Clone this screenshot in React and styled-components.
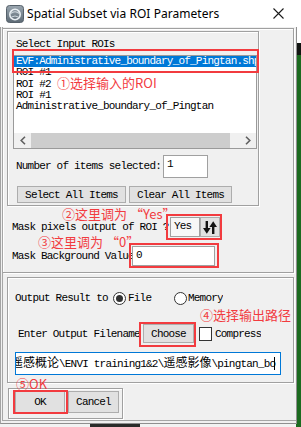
import React from 'react';
import styled, { createGlobalStyle } from 'styled-components';

const MONO = '"Liberation Mono", "Noto Sans CJK SC", monospace';
const CJK = '"Noto Sans CJK SC", "Noto Sans", sans-serif';
const RED = '#f23b3f';

const Global = createGlobalStyle`
  html, body { margin: 0; padding: 0; background: #fff; }
  body { width: 301px; height: 427px; overflow: hidden; }
  * { box-sizing: border-box; }
`;

const Desktop = styled.div`
  position: relative;
  width: 301px;
  height: 427px;
  display: grid;
  grid-template-columns: 297px 4px;
  grid-template-rows: 424px 3px;
  background: #fff;
`;

const RightStrip = styled.div`
  display: flex;
  flex-direction: column;
`;

const VSeg = styled.div`
  background: ${p => p.$c};
  height: ${p => (p.$h ? `${p.$h}px` : 'auto')};
  flex: ${p => (p.$h ? 'none' : 1)};
`;

const BottomStrip = styled.div`
  grid-column: 1 / 3;
  display: flex;
`;

const HSeg = styled.div`
  background: ${p => p.$c};
  width: ${p => (p.$w ? `${p.$w}px` : 'auto')};
  flex: ${p => (p.$w ? 'none' : 1)};
`;

const Window = styled.div`
  display: flex;
  flex-direction: column;
  border-left: 1px solid #a3a3a3;
  border-right: 1px solid #8f8f8f;
  border-bottom: 1px solid #8f8f8f;
  background: #f0f0f0;
  height: 424px;
`;

const TitleBar = styled.div`
  height: 27px;
  flex: none;
  background: #fff;
  display: flex;
  align-items: center;
  padding-left: 6px;
  margin-left: -1px;
  margin-right: -5px;
`;

const TitleText = styled.div`
  font-family: "Noto Sans", "Liberation Sans", sans-serif;
  font-size: 12px;
  color: #000;
  margin-left: 3px;
  flex: 1;
  letter-spacing: 0.05px;
`;

const CloseBox = styled.div`
  width: 30px;
  margin-right: 8px;
  display: flex;
  justify-content: center;
  align-items: center;
`;

const Client = styled.div`
  flex: 1;
  display: flex;
  flex-direction: column;
  align-items: flex-start;
  margin-left: 1px;
  border-left: 1px solid #a6a6a6;
  border-bottom: 1px solid #a6a6a6;
  padding-top: 1px;
  margin-bottom: 2px;
  width: 294px;
`;

const Etched = styled.div`
  border: 1px solid #a0a0a0;
  box-shadow: inset 1px 1px 0 #fff, 1px 1px 0 #fff;
`;

const PanelA = styled(Etched)`
  border-left: none;
  width: 291px;
  height: 245px;
  display: flex;
  flex-direction: column;
  align-items: flex-start;
`;

const InnerFrame = styled(Etched)`
  margin: 2px 0 0 4px;
  width: 252px;
  height: 175px;
  display: flex;
  flex-direction: column;
  align-items: flex-start;
`;

const Text = styled.div`
  font-family: ${MONO};
  font-size: 11px;
  letter-spacing: -0.8px;
  color: #000;
  white-space: nowrap;
  line-height: ${p => p.$lh || 12}px;
`;

const FrameLabel = styled(Text)`
  margin: 6px 0 0 8px;
  height: 12px;
`;

const ListBox = styled.div`
  margin: 5px 0 0 5px;
  width: 244px;
  height: 94px;
  border: 1px solid #9a9a9a;
  background: #fff;
  display: flex;
  flex-direction: column;
`;

const Rows = styled.div`
  flex: 1;
  overflow: hidden;
`;

const Row = styled(Text)`
  line-height: 11.3px;
  height: 11.3px;
  padding-left: 2px;
  background: ${p => (p.$sel ? '#0078d7' : 'transparent')};
  color: ${p => (p.$sel ? '#fff' : '#000')};
  overflow: hidden;
`;

const HScroll = styled.div`
  height: 15px;
  flex: none;
  background: #f0f0f0;
  display: flex;
  align-items: stretch;
`;

const ArrowBtn = styled.div`
  width: 17px;
  display: flex;
  align-items: center;
  justify-content: center;
`;

const Thumb = styled.div`
  width: 199px;
  background: #cdcdcd;
`;

const Track = styled.div`
  flex: 1;
`;

const FieldRow = styled.div`
  display: flex;
  align-items: ${p => p.$align || 'center'};
  margin: ${p => p.$m};
  height: ${p => p.$h}px;
`;

const TextField = styled.div`
  width: ${p => p.$w}px;
  height: ${p => p.$h}px;
  background: #fff;
  border: 1px solid ${p => (p.$focus ? '#0078d7' : '#a0a0a0')};
  padding: ${p => p.$pad || '2px 0 0 3px'};
  overflow: hidden;
  flex: none;
  font-family: ${MONO};
  font-size: 11px;
  letter-spacing: -0.8px;
  line-height: 12px;
  white-space: nowrap;
  color: #000;
`;

const Button = styled.div`
  width: ${p => p.$w}px;
  height: ${p => p.$h}px;
  background: #e1e1e1;
  border: 1px solid #adadad;
  display: flex;
  align-items: center;
  justify-content: center;
  flex: none;
  font-family: ${MONO};
  font-size: 11px;
  letter-spacing: -0.8px;
  color: #000;
  white-space: nowrap;
`;

const Label = styled(Text)`
  width: ${p => (p.$w ? `${p.$w}px` : 'auto')};
  overflow: hidden;
  flex: none;
`;

const PanelB = styled(Etched)`
  margin: 4px 0 0 4px;
  width: 287px;
  height: 106px;
  display: flex;
  flex-direction: column;
  align-items: flex-start;
`;

const Radio = styled.div`
  width: 13px;
  height: 13px;
  border-radius: 50%;
  border: 1px solid #333;
  background: #fff;
  display: flex;
  align-items: center;
  justify-content: center;
  flex: none;
  &::after {
    content: '';
    display: ${p => (p.$on ? 'block' : 'none')};
    width: 7px;
    height: 7px;
    border-radius: 50%;
    background: #333;
  }
`;

const Check = styled.div`
  width: 13px;
  height: 14px;
  border: 1px solid #333;
  background: #fff;
  flex: none;
`;

const Cjk = styled.span`
  font-family: ${CJK};
  font-size: 12px;
  letter-spacing: 0;
`;

const Caret = styled.span`
  display: inline-block;
  width: 1px;
  height: 13px;
  background: #000;
  vertical-align: -3px;
  margin-left: -1px;
`;

const PanelC = styled(Etched)`
  margin: 5px 0 0 5px;
  width: 115px;
  height: 31px;
  display: flex;
  align-items: flex-start;
  padding: 2px 0 0 6px;
  gap: 3px;
`;

const Note = styled.div`
  position: absolute;
  left: ${p => p.$x}px;
  top: ${p => p.$y}px;
  font-family: ${CJK};
  font-size: 13px;
  line-height: 15px;
  color: ${RED};
  white-space: nowrap;
`;

const Callout = styled.div`
  position: absolute;
  left: ${p => p.$x}px;
  top: ${p => p.$y}px;
  width: ${p => p.$w}px;
  height: ${p => p.$h}px;
  border: 2px solid ${RED};
`;

const AppIcon = () => (
  <svg width="18" height="18" viewBox="0 0 18 18">
    <defs>
      <linearGradient id="ig" x1="0" y1="0" x2="0" y2="1">
        <stop offset="0" stopColor="#9aa6b0" />
        <stop offset="1" stopColor="#5d6a75" />
      </linearGradient>
    </defs>
    <rect x="0.5" y="0.5" width="17" height="17" rx="3" fill="url(#ig)" stroke="#56616b" />
    <circle cx="9" cy="9.5" r="5.2" fill="none" stroke="#e8eef2" strokeWidth="1.6" />
    <path d="M4.5 8.5 Q9 5 13.5 8.5" fill="none" stroke="#cfd8de" strokeWidth="1.2" />
    <path d="M5.5 12 Q9 10 12.5 12" fill="none" stroke="#cfd8de" strokeWidth="1" />
  </svg>
);

const CloseIcon = () => (
  <svg width="11" height="11" viewBox="0 0 11 11">
    <path d="M0.5 0.5 L10.5 10.5 M10.5 0.5 L0.5 10.5" stroke="#1a1a1a" strokeWidth="1.1" />
  </svg>
);

const Chevron = ({ dir }) => (
  <svg width="6" height="9" viewBox="0 0 6 9">
    <path
      d={dir === 'left' ? 'M5 0.8 L1.2 4.5 L5 8.2' : 'M1 0.8 L4.8 4.5 L1 8.2'}
      fill="none"
      stroke="#606060"
      strokeWidth="1.6"
    />
  </svg>
);

const SwapIcon = () => (
  <svg width="14" height="13" viewBox="0 0 14 13">
    <rect x="2.6" y="0" width="2.4" height="8" fill="#111" />
    <polygon points="0,7 7.6,7 3.8,12.8" fill="#111" />
    <rect x="9" y="5" width="2.4" height="8" fill="#111" />
    <polygon points="6.4,6 14,6 10.2,0.2" fill="#111" />
  </svg>
);

export default function App() {
  return (
    <>
      <Global />
      <Desktop>
        <Window>
          <TitleBar>
            <AppIcon />
            <TitleText>Spatial Subset via ROI Parameters</TitleText>
            <CloseBox>
              <CloseIcon />
            </CloseBox>
          </TitleBar>
          <Client>
            <PanelA>
              <InnerFrame>
                <FrameLabel>Select Input ROIs</FrameLabel>
                <ListBox>
                  <Rows>
                    <Row $sel>EVF:Administrative_boundary_of_Pingtan.shp</Row>
                    <Row>ROI #1</Row>
                    <Row>ROI #2</Row>
                    <Row>ROI #1</Row>
                    <Row>Administrative_boundary_of_Pingtan</Row>
                  </Rows>
                  <HScroll>
                    <ArrowBtn><Chevron dir="left" /></ArrowBtn>
                    <Thumb />
                    <Track />
                    <ArrowBtn><Chevron dir="right" /></ArrowBtn>
                  </HScroll>
                </ListBox>
                <FieldRow $m="5px 0 0 8px" $h={24}>
                  <Label $w={147}>Number of items selected:</Label>
                  <TextField $w={45} $h={23}>1</TextField>
                </FieldRow>
                <FieldRow $m="8px 0 0 9px" $h={17} style={{ gap: '3px' }}>
                  <Button $w={109} $h={17}>Select All Items</Button>
                  <Button $w={103} $h={17}>Clear All Items</Button>
                </FieldRow>
              </InnerFrame>
              <FieldRow $m="11px 0 0 9px" $h={20}>
                <Label $w={158}>Mask pixels output of ROI ?</Label>
                <TextField $w={30} $h={20} style={{ background: '#f7f7f7' }}>Yes</TextField>
                <Button $w={20} $h={20}><SwapIcon /></Button>
              </FieldRow>
              <FieldRow $m="9px 0 0 9px" $h={20}>
                <Label $w={120}>Mask Background Value:</Label>
                <TextField $w={83} $h={20}>0</TextField>
              </FieldRow>
            </PanelA>

            <PanelB>
              <FieldRow $m="12px 0 0 7px" $h={16}>
                <Label $w={98}>Output Result to</Label>
                <Radio $on />
                <Label $w={46} style={{ marginLeft: '2px' }}>File</Label>
                <Radio />
                <Label style={{ marginLeft: '1px' }}>Memory</Label>
              </FieldRow>
              <FieldRow $m="18px 0 0 10px" $h={19}>
                <Label $w={125}>Enter Output Filename</Label>
                <Button $w={51} $h={19}>Choose</Button>
                <Check style={{ marginLeft: '5px' }} />
                <Label style={{ marginLeft: '3px' }}>Compress</Label>
              </FieldRow>
              <FieldRow $m="9px 0 0 7px" $h={23}>
                <TextField $w={266} $h={23} $focus $pad="3px 0 0 0">
                  <span style={{ display: 'inline-block', marginLeft: '-5px' }}>
                    <Cjk>遥感概论</Cjk>\ENVI training1&amp;2\<Cjk>遥感影像</Cjk>\pingtan_bo<Caret />
                  </span>
                </TextField>
              </FieldRow>
            </PanelB>

            <PanelC>
              <Button $w={50} $h={22}>OK</Button>
              <Button $w={51} $h={22}>Cancel</Button>
            </PanelC>
          </Client>
        </Window>

        <RightStrip>
          <VSeg $c="#ffffff" $h={43} />
          <VSeg $c="#121512" $h={12} />
          <VSeg $c="#1b6a1f" />
        </RightStrip>

        <BottomStrip>
          <HSeg $c="#f2f2f2" $w={90} />
          <HSeg $c="#2a2c2a" $w={50} />
          <HSeg $c="#f2f2f2" />
          <HSeg $c="#1b6a1f" $w={5} />
        </BottomStrip>

        <Callout $x={12} $y={49} $w={247} $h={24} />
        <Note $x={57} $y={75}>①选择输入的ROI</Note>
        <Note $x={62} $y={206}>②这里调为 “Yes”</Note>
        <Callout $x={166} $y={214} $w={56} $h={26} />
        <Note $x={38} $y={234}>③这里调为 “0”</Note>
        <Callout $x={129} $y={243} $w={90} $h={25} />
        <Note $x={200} $y={307}>④选择输出路径</Note>
        <Callout $x={139} $y={322} $w={57} $h={25} />
        <Note $x={16} $y={376}>⑤OK</Note>
        <Callout $x={13} $y={390} $w={55} $h={24} />
      </Desktop>
    </>
  );
}
